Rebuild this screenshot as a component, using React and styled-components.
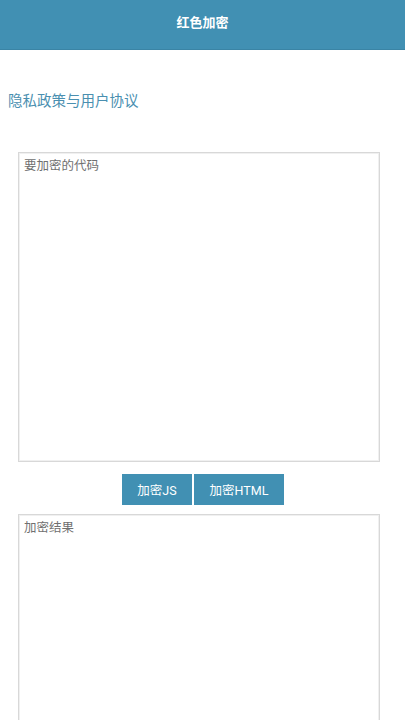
import React, { useState } from "react";
import styled, { createGlobalStyle } from "styled-components";

const GlobalStyle = createGlobalStyle`
  html, body {
    margin: 0;
    padding: 0;
    background: #ffffff;
    font-family: Roboto, "Noto Sans CJK SC", sans-serif;
  }
  * { box-sizing: border-box; }
`;

const Page = styled.div`
  width: 405px;
  height: 720px;
  overflow: hidden;
`;

const Header = styled.header`
  height: 50px;
  background: #4190b3;
  border-bottom: 1px solid #3a84a5;
  display: flex;
  align-items: center;
  justify-content: center;
  color: #ffffff;
  font-size: 13px;
  font-weight: bold;
  padding-bottom: 7px;
`;

const PolicyLink = styled.a`
  display: block;
  margin: 42px 0 0 8px;
  height: 20px;
  line-height: 20px;
  font-size: 14.5px;
  color: #4a8fb0;
  text-decoration: none;
`;

const CodeBox = styled.textarea`
  display: block;
  margin: ${(p) => p.$top}px 0 0 18px;
  width: 362px;
  height: ${(p) => p.$height}px;
  border: 1px solid #d8d8d8;
  box-shadow: inset 0 0 0 1px #f0f0f0;
  padding: 4px 5px;
  font-family: Roboto, "Noto Sans CJK SC", sans-serif;
  font-size: 12.5px;
  line-height: 18px;
  color: #333;
  resize: none;
  outline: none;
  &::placeholder {
    color: #707070;
  }
`;

const ButtonRow = styled.div`
  display: flex;
  justify-content: center;
  gap: 2px;
  margin-top: 12px;
  padding-left: 1px;
`;

const ActionButton = styled.button`
  width: ${(p) => p.$w}px;
  height: 31px;
  border: none;
  background: #4190b3;
  color: #ffffff;
  font-family: Roboto, "Noto Sans CJK SC", sans-serif;
  font-size: 12.5px;
  padding: 0;
  cursor: pointer;
`;

export default function App() {
  const [code, setCode] = useState("");
  const [result, setResult] = useState("");

  const encode = (type) => {
    if (!code) return;
    setResult(`/* ${type} */ ` + btoa(unescape(encodeURIComponent(code))));
  };

  return (
    <Page>
      <GlobalStyle />
      <Header>红色加密</Header>
      <PolicyLink href="#">隐私政策与用户协议</PolicyLink>
      <CodeBox
        $top={40}
        $height={310}
        placeholder="要加密的代码"
        value={code}
        onChange={(e) => setCode(e.target.value)}
      />
      <ButtonRow>
        <ActionButton $w={70} onClick={() => encode("JS")}>加密JS</ActionButton>
        <ActionButton $w={90} onClick={() => encode("HTML")}>加密HTML</ActionButton>
      </ButtonRow>
      <CodeBox
        $top={9}
        $height={310}
        placeholder="加密结果"
        value={result}
        readOnly
      />
    </Page>
  );
}
